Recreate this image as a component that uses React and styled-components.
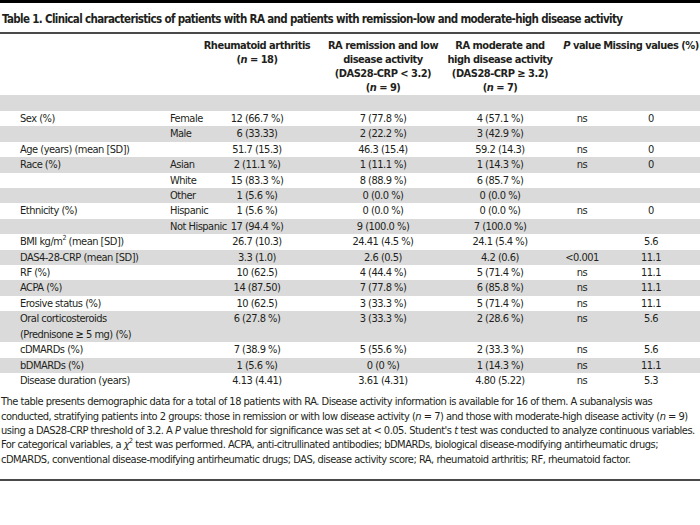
import React from "react";
import styled, { createGlobalStyle } from "styled-components";

// label | sub | RA | remission | moderate | P | missing
const COLS = "170px 20px 134px 118px 116px 48px 90px";

const GlobalStyle = createGlobalStyle`
  html, body {
    margin: 0;
    padding: 0;
    background: #ffffff;
  }
  body {
    font-family: "DejaVu Sans Condensed", "Liberation Sans", sans-serif;
    color: #231f20;
  }
`;
const Page = styled.div`
  width: 700px;
  height: 525px;
  border-top: 3px solid #000000;
  box-sizing: border-box;
  overflow: hidden;
`;
const Title = styled.div`
  font-size: 11.5px;
  font-weight: 700;
  letter-spacing: -0.65px;
  line-height: 15px;
  padding: 9px 0 5px 2px;
  border-bottom: 2px solid #4a4a4a;
  white-space: nowrap;
`;
const Head = styled.div`
  display: grid;
  grid-template-columns: ${COLS};
  padding-top: 5px;
  font-size: 11px;
  font-weight: 700;
  letter-spacing: -0.5px;
  line-height: 14px;
`;
const HeadCell = styled.div`
  display: flex;
  justify-content: center;
  white-space: nowrap;
`;
const HeadText = styled.div`
  text-align: center;
`;
const Spacer = styled.div`
  height: 16px;
  background: #dadada;
`;
const Row = styled.div`
  display: grid;
  grid-template-columns: ${COLS};
  font-size: 11px;
  letter-spacing: -0.5px;
  line-height: 15.4px;
  background: ${({ $shade }) => ($shade ? "#dadada" : "#ffffff")};
`;
const Label = styled.div`
  padding-left: 20px;
  white-space: nowrap;
`;
const Sub = styled.div`
  white-space: nowrap;
`;
const Value = styled.div`
  display: flex;
  justify-content: center;
  white-space: nowrap;
`;
const Sup = styled.sup`
  font-size: 7px;
  line-height: 0;
`;
const Note = styled.div`
  display: flex;
  flex-direction: column;
  padding: 7px 0 12px 1px;
  font-size: 11px;
  letter-spacing: -0.5px;
  line-height: 14.3px;
  white-space: nowrap;
  border-bottom: 2px solid #4a4a4a;
`;

const rows = [
  { label: "Sex (%)", sub: "Female", v: ["12 (66.7 %)", "7 (77.8 %)", "4 (57.1 %)"], p: "ns", m: "0" },
  { sub: "Male", v: ["6 (33.33)", "2 (22.2 %)", "3 (42.9 %)"] },
  { label: "Age (years) (mean [SD])", v: ["51.7 (15.3)", "46.3 (15.4)", "59.2 (14.3)"], p: "ns", m: "0" },
  { label: "Race (%)", sub: "Asian", v: ["2 (11.1 %)", "1 (11.1 %)", "1 (14.3 %)"], p: "ns", m: "0" },
  { sub: "White", v: ["15 (83.3 %)", "8 (88.9 %)", "6 (85.7 %)"] },
  { sub: "Other", v: ["1 (5.6 %)", "0 (0.0 %)", "0 (0.0 %)"] },
  { label: "Ethnicity (%)", sub: "Hispanic", v: ["1 (5.6 %)", "0 (0.0 %)", "0 (0.0 %)"], p: "ns", m: "0" },
  { sub: "Not Hispanic", v: ["17 (94.4 %)", "9 (100.0 %)", "7 (100.0 %)"] },
  {
    label: (
      <>
        BMI kg/m<Sup>2</Sup> (mean [SD])
      </>
    ),
    v: ["26.7 (10.3)", "24.41 (4.5 %)", "24.1 (5.4 %)"],
    m: "5.6",
  },
  { label: "DAS4-28-CRP (mean [SD])", v: ["3.3 (1.0)", "2.6 (0.5)", "4.2 (0.6)"], p: "<0.001", m: "11.1" },
  { label: "RF (%)", v: ["10 (62.5)", "4 (44.4 %)", "5 (71.4 %)"], p: "ns", m: "11.1" },
  { label: "ACPA (%)", v: ["14 (87.50)", "7 (77.8 %)", "6 (85.8 %)"], p: "ns", m: "11.1" },
  { label: "Erosive status (%)", v: ["10 (62.5)", "3 (33.3 %)", "5 (71.4 %)"], p: "ns", m: "11.1" },
  {
    label: (
      <>
        Oral corticosteroids
        <br />
        (Prednisone ≥ 5 mg) (%)
      </>
    ),
    v: ["6 (27.8 %)", "3 (33.3 %)", "2 (28.6 %)"],
    p: "ns",
    m: "5.6",
  },
  { label: "cDMARDs (%)", v: ["7 (38.9 %)", "5 (55.6 %)", "2 (33.3 %)"], p: "ns", m: "5.6" },
  { label: "bDMARDs (%)", v: ["1 (5.6 %)", "0 (0 %)", "1 (14.3 %)"], p: "ns", m: "11.1" },
  { label: "Disease duration (years)", v: ["4.13 (4.41)", "3.61 (4.31)", "4.80 (5.22)"], p: "ns", m: "5.3" },
];

function App() {
  return (
    <Page>
      <GlobalStyle />
      <Title>
        Table 1. Clinical characteristics of patients with RA and patients with remission-low and
        moderate-high disease activity
      </Title>
      <Head>
        <span />
        <span />
        <HeadCell>
          <HeadText>
            Rheumatoid arthritis
            <br />(<i>n</i> = 18)
          </HeadText>
        </HeadCell>
        <HeadCell>
          <HeadText>
            RA remission and low
            <br />
            disease activity
            <br />
            (DAS28-CRP &lt; 3.2)
            <br />(<i>n</i> = 9)
          </HeadText>
        </HeadCell>
        <HeadCell>
          <HeadText>
            RA moderate and
            <br />
            high disease activity
            <br />
            (DAS28-CRP ≥ 3.2)
            <br />(<i>n</i> = 7)
          </HeadText>
        </HeadCell>
        <HeadCell>
          <HeadText>
            <i>P</i> value
          </HeadText>
        </HeadCell>
        <HeadCell>
          <HeadText>Missing values (%)</HeadText>
        </HeadCell>
      </Head>
      <Spacer />
      {rows.map((r, i) => (
        <Row key={i} $shade={i % 2 === 1}>
          <Label>{r.label}</Label>
          <Sub>{r.sub}</Sub>
          <Value>{r.v[0]}</Value>
          <Value>{r.v[1]}</Value>
          <Value>{r.v[2]}</Value>
          <Value>{r.p}</Value>
          <Value>{r.m}</Value>
        </Row>
      ))}
      <Note>
        <span>
          The table presents demographic data for a total of 18 patients with RA. Disease activity
          information is available for 16 of them. A subanalysis was
        </span>
        <span>
          conducted, stratifying patients into 2 groups: those in remission or with low disease
          activity (<i>n</i> = 7) and those with moderate-high disease activity (<i>n</i> = 9)
        </span>
        <span>
          using a DAS28-CRP threshold of 3.2. A <i>P</i> value threshold for significance was set at
          &lt; 0.05. Student's <i>t</i> test was conducted to analyze continuous variables.
        </span>
        <span>
          For categorical variables, a <i>χ</i>
          <Sup>2</Sup> test was performed. ACPA, anti-citrullinated antibodies; bDMARDs, biological
          disease-modifying antirheumatic drugs;
        </span>
        <span>
          cDMARDS, conventional disease-modifying antirheumatic drugs; DAS, disease activity score;
          RA, rheumatoid arthritis; RF, rheumatoid factor.
        </span>
      </Note>
    </Page>
  );
}

export default App;
